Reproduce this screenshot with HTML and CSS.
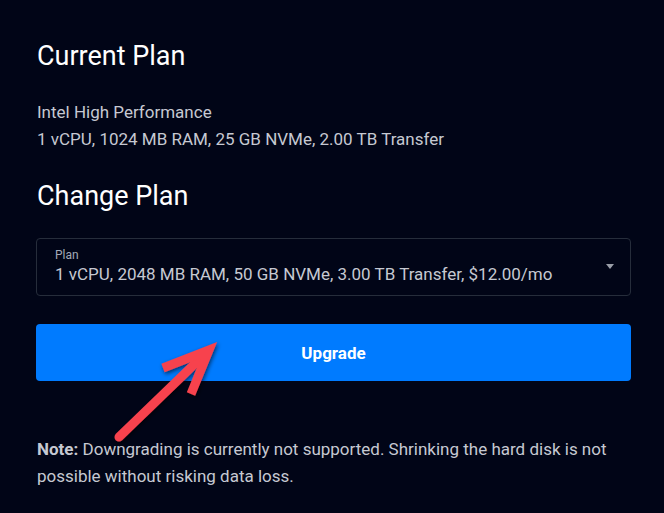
FILE: index.html
```html
<!DOCTYPE html>
<html>
<head>
<meta charset="utf-8">
<link rel="stylesheet" href="styles.css">
</head>
<body>
<div class="page">
  <h2 class="title">Current Plan</h2>
  <p class="info">Intel High Performance<br>1 vCPU, 1024 MB RAM, 25 GB NVMe, 2.00 TB Transfer</p>
  <h2 class="title title-change">Change Plan</h2>
  <div class="select">
    <div class="select-label">Plan</div>
    <div class="select-value">1 vCPU, 2048 MB RAM, 50 GB NVMe, 3.00 TB Transfer, $12.00/mo</div>
    <span class="caret"></span>
  </div>
  <button class="btn">Upgrade</button>
  <p class="note"><strong>Note:</strong> Downgrading is currently not supported. Shrinking the hard disk is not possible without risking data loss.</p>
</div>
<svg class="arrow" width="664" height="513" viewBox="0 0 664 513">
  <defs>
    <filter id="sh" x="-20%" y="-20%" width="140%" height="140%">
      <feDropShadow dx="1" dy="2" stdDeviation="2" flood-color="#000" flood-opacity="0.6"/>
    </filter>
  </defs>
  <g filter="url(#sh)" stroke="#f7434d" fill="none">
    <line x1="119" y1="437" x2="205" y2="354" stroke-width="9" stroke-linecap="round"/>
    <polyline points="163,368 209,350 191,394" stroke-width="9" stroke-linejoin="miter" stroke-miterlimit="10"/>
  </g>
</svg>
</body>
</html>
```

FILE: styles.css
```css
html, body {
  margin: 0;
  padding: 0;
  background: #010517;
}
body {
  font-family: Roboto, "Noto Sans", sans-serif;
  color: #c6c9d2;
  width: 664px;
  height: 513px;
  overflow: hidden;
  position: relative;
}
.page {
  padding: 38px 33px 0 37px;
}
.title {
  margin: 0;
  font-size: 27px;
  font-weight: 400;
  color: #ffffff;
  line-height: 36px;
}
.info {
  margin: 25px 0 0;
  font-size: 17px;
  line-height: 27px;
}
.title-change {
  margin-top: 25px;
}
.select {
  position: relative;
  margin-top: 24px;
  margin-left: -1px;
  border: 1px solid #262d3b;
  border-radius: 4px;
  box-sizing: border-box;
  height: 58px;
  padding: 8px 18px 0;
}
.select-label {
  font-size: 12px;
  color: #a3aab8;
  line-height: 16px;
}
.select-value {
  font-size: 17px;
  line-height: 22px;
}
.caret {
  position: absolute;
  right: 16px;
  top: 25px;
  width: 0;
  height: 0;
  border-left: 4px solid transparent;
  border-right: 4px solid transparent;
  border-top: 5px solid #9a9ea8;
}
.btn {
  display: block;
  width: calc(100% + 1px);
  margin: 28px 0 0 -1px;
  height: 57px;
  border: 0;
  border-radius: 4px;
  background: #007bff;
  color: #fff;
  font-family: Roboto, sans-serif;
  font-weight: 700;
  font-size: 17px;
}
.note {
  margin: 55px 0 0;
  font-size: 17px;
  line-height: 27px;
}
.note strong {
  font-weight: 700;
}
.arrow {
  position: absolute;
  left: 0;
  top: 0;
  pointer-events: none;
}
```
